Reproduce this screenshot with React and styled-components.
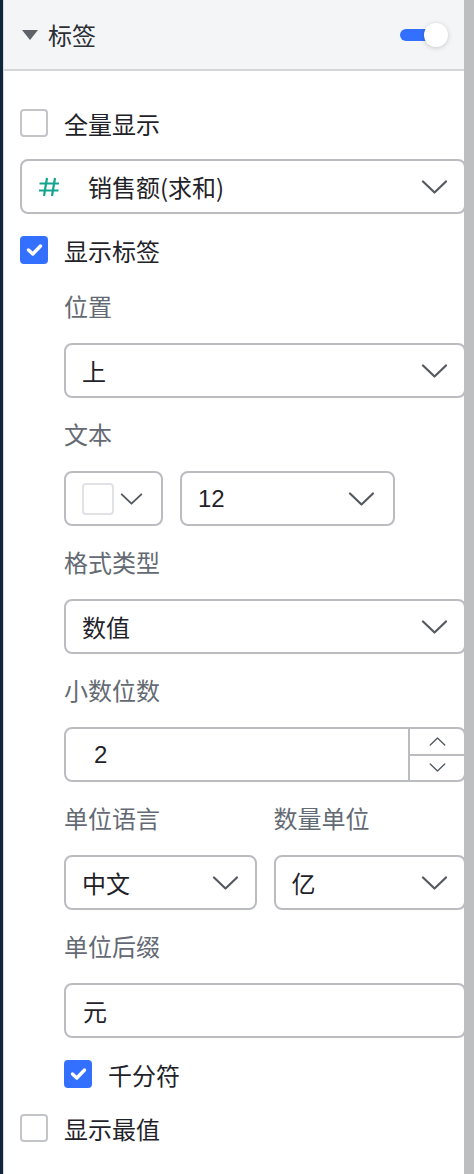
import React, { useState } from "react";
import styled, { createGlobalStyle } from "styled-components";

const GlobalStyle = createGlobalStyle`
  html, body {
    margin: 0;
    padding: 0;
    background: #ffffff;
  }
  body {
    font-family: "Noto Sans CJK SC", "Liberation Sans", sans-serif;
  }
`;

function Chevron({ up, width = 27, height = 14 }) {
  return (
    <svg width={width} height={height} viewBox="0 0 27 14" fill="none">
      <path
        d={up ? "M2 12.5L13.5 1.5L25 12.5" : "M2 1.5L13.5 12.5L25 1.5"}
        stroke="#555a61"
        strokeWidth="2.2"
        strokeLinecap="round"
        strokeLinejoin="round"
      />
    </svg>
  );
}

function CheckMark() {
  return (
    <svg width="17" height="14" viewBox="0 0 17 14" fill="none">
      <path
        d="M2.5 7L6.8 11L14.5 3"
        stroke="#ffffff"
        strokeWidth="3.4"
        strokeLinecap="round"
        strokeLinejoin="round"
      />
    </svg>
  );
}

// field-type glyph shown before a measure name
function HashIcon() {
  return (
    <svg width="22" height="20" viewBox="0 0 22 20" fill="none">
      <path
        d="M9 1L6 19M17 1L14 19M1.5 6.5H21M1 13.5H20.5"
        stroke="#14a58f"
        strokeWidth="2.2"
      />
    </svg>
  );
}

function Checkbox({ checked, label, onToggle }) {
  return (
    <CheckRow onClick={onToggle}>
      <Box $checked={checked}>{checked && <CheckMark />}</Box>
      <CheckText>{label}</CheckText>
    </CheckRow>
  );
}

function Select({ children, prefix }) {
  return (
    <SelectBox>
      {prefix && (
        <HashSlot>
          <HashIcon />
        </HashSlot>
      )}
      <SelectValue>{children}</SelectValue>
      <Chevron />
    </SelectBox>
  );
}

function App() {
  const [showAll, setShowAll] = useState(false);
  const [showLabel, setShowLabel] = useState(true);
  const [thousands, setThousands] = useState(true);
  const [showMax, setShowMax] = useState(false);

  return (
    <>
      <GlobalStyle />
      <Frame>
        <EdgeStrip />
        <Panel>
          <Header>
            <HeaderTitle>
              <Caret />
              标签
            </HeaderTitle>
            <Toggle>
              <Knob />
            </Toggle>
          </Header>

          <Body>
            <Checkbox
              checked={showAll}
              label="全量显示"
              onToggle={() => setShowAll(!showAll)}
            />
            <Select prefix>销售额(求和)</Select>
            <Checkbox
              checked={showLabel}
              label="显示标签"
              onToggle={() => setShowLabel(!showLabel)}
            />

            <SubSection>
              <Field>
                <Label>位置</Label>
                <Select>上</Select>
              </Field>

              <Field>
                <Label>文本</Label>
                <TextRow>
                  <ColorPicker>
                    <Swatch />
                    <Chevron />
                  </ColorPicker>
                  <SizeSelect>
                    <SelectValue $latin>12</SelectValue>
                    <Chevron />
                  </SizeSelect>
                </TextRow>
              </Field>

              <Field>
                <Label>格式类型</Label>
                <Select>数值</Select>
              </Field>

              <Field>
                <Label>小数位数</Label>
                <NumberBox>
                  <NumberValue>2</NumberValue>
                  <Stepper>
                    <StepButton>
                      <Chevron up width={17} height={9} />
                    </StepButton>
                    <StepButton $bottom>
                      <Chevron width={17} height={9} />
                    </StepButton>
                  </Stepper>
                </NumberBox>
              </Field>

              <TwoCols>
                <Field>
                  <Label>单位语言</Label>
                  <Select>中文</Select>
                </Field>
                <Field>
                  <Label>数量单位</Label>
                  <Select>亿</Select>
                </Field>
              </TwoCols>

              <Field>
                <Label>单位后缀</Label>
                <InputBox>元</InputBox>
              </Field>

              <Checkbox
                checked={thousands}
                label="千分符"
                onToggle={() => setThousands(!thousands)}
              />
            </SubSection>

            <Checkbox
              checked={showMax}
              label="显示最值"
              onToggle={() => setShowMax(!showMax)}
            />
          </Body>
        </Panel>
        <ScrollTrack />
      </Frame>
    </>
  );
}

const Frame = styled.div`
  display: flex;
  width: 474px;
  height: 1174px;
  overflow: hidden;
`;

const EdgeStrip = styled.div`
  width: 3px;
  flex-shrink: 0;
  background: #10263d;
  border-right: 1px solid #d9dbdf;
`;

const ScrollTrack = styled.div`
  width: 10px;
  flex-shrink: 0;
  background: #bdbec0;
`;

const Panel = styled.div`
  flex: 1;
  min-width: 0;
  background: #ffffff;
`;

const Header = styled.div`
  height: 69px;
  display: flex;
  align-items: center;
  justify-content: space-between;
  padding: 0 16px 0 18px;
  background: #f4f5f7;
  border-bottom: 2px solid #d5d6d8;
`;

const HeaderTitle = styled.div`
  display: flex;
  align-items: center;
  gap: 10px;
  font-size: 24px;
  color: #2b2f36;
  line-height: 1;
`;

const Caret = styled.span`
  width: 0;
  height: 0;
  border-left: 8px solid transparent;
  border-right: 8px solid transparent;
  border-top: 10px solid #5f6369;
`;

const Toggle = styled.div`
  position: relative;
  width: 40px;
  height: 12px;
  border-radius: 6px;
  background: #3370ff;
  margin-right: 8px;
`;

const Knob = styled.span`
  position: absolute;
  right: -8px;
  top: -6px;
  width: 24px;
  height: 24px;
  border-radius: 50%;
  background: #ffffff;
  box-shadow: 0 1px 5px rgba(0, 0, 0, 0.18);
`;

const Body = styled.div`
  display: flex;
  flex-direction: column;
  gap: 18px;
  padding: 34px 0 0 16px;
  margin-right: -2px;
`;

const CheckRow = styled.div`
  display: flex;
  align-items: center;
  gap: 16px;
  height: 36px;
  cursor: pointer;
`;

const Box = styled.span`
  box-sizing: border-box;
  width: 28px;
  height: 28px;
  border-radius: 4px;
  display: flex;
  align-items: center;
  justify-content: center;
  background: ${(p) => (p.$checked ? "#3370ff" : "#ffffff")};
  border: 2px solid ${(p) => (p.$checked ? "#3370ff" : "#c3c5c9")};
`;

const CheckText = styled.span`
  font-size: 24px;
  color: #1f2329;
`;

const SelectBox = styled.div`
  box-sizing: border-box;
  height: 55px;
  display: flex;
  align-items: center;
  padding: 0 16px 0 16px;
  border: 2px solid #babcc0;
  border-radius: 8px;
  background: #ffffff;
`;

const HashSlot = styled.span`
  display: flex;
  margin-right: 28px;
`;

const SelectValue = styled.span`
  flex: 1;
  font-size: ${(p) => (p.$latin ? "24px" : "24px")};
  color: #1f2329;
  font-family: ${(p) =>
    p.$latin
      ? `"Liberation Sans", sans-serif`
      : `"Noto Sans CJK SC", "Liberation Sans", sans-serif`};
`;

const SubSection = styled.div`
  display: flex;
  flex-direction: column;
  gap: 18px;
  padding: 2px 0 0 44px;
`;

const Field = styled.div`
  display: flex;
  flex-direction: column;
  gap: 19px;
  min-width: 0;
`;

const Label = styled.div`
  height: 36px;
  line-height: 36px;
  font-size: 24px;
  color: #646a73;
`;

const TextRow = styled.div`
  display: flex;
  gap: 17px;
`;

const ColorPicker = styled(SelectBox)`
  width: 99px;
  padding: 0 18px 0 16px;
  gap: 6px;
  svg {
    width: 23px;
  }
`;

const Swatch = styled.span`
  box-sizing: border-box;
  width: 32px;
  height: 32px;
  border: 2px solid #e1e2e5;
  border-radius: 4px;
  background: #ffffff;
`;

const SizeSelect = styled(SelectBox)`
  width: 215px;
  padding-right: 18px;
`;

const NumberBox = styled.div`
  box-sizing: border-box;
  height: 55px;
  display: flex;
  border: 2px solid #babcc0;
  border-radius: 8px;
  overflow: hidden;
`;

const NumberValue = styled.div`
  flex: 1;
  display: flex;
  align-items: center;
  padding-left: 28px;
  font-family: "Liberation Sans", sans-serif;
  font-size: 24px;
  color: #1f2329;
`;

const Stepper = styled.div`
  width: 54px;
  display: flex;
  flex-direction: column;
  border-left: 2px solid #babcc0;
`;

const StepButton = styled.div`
  flex: 1;
  display: flex;
  align-items: center;
  justify-content: center;
  border-top: ${(p) => (p.$bottom ? "2px solid #babcc0" : "none")};
`;

const TwoCols = styled.div`
  display: grid;
  grid-template-columns: 1fr 1fr;
  column-gap: 17px;
`;

const InputBox = styled.div`
  box-sizing: border-box;
  height: 55px;
  display: flex;
  align-items: center;
  padding-left: 17px;
  border: 2px solid #babcc0;
  border-radius: 8px;
  font-size: 24px;
  color: #1f2329;
`;

export default App;
